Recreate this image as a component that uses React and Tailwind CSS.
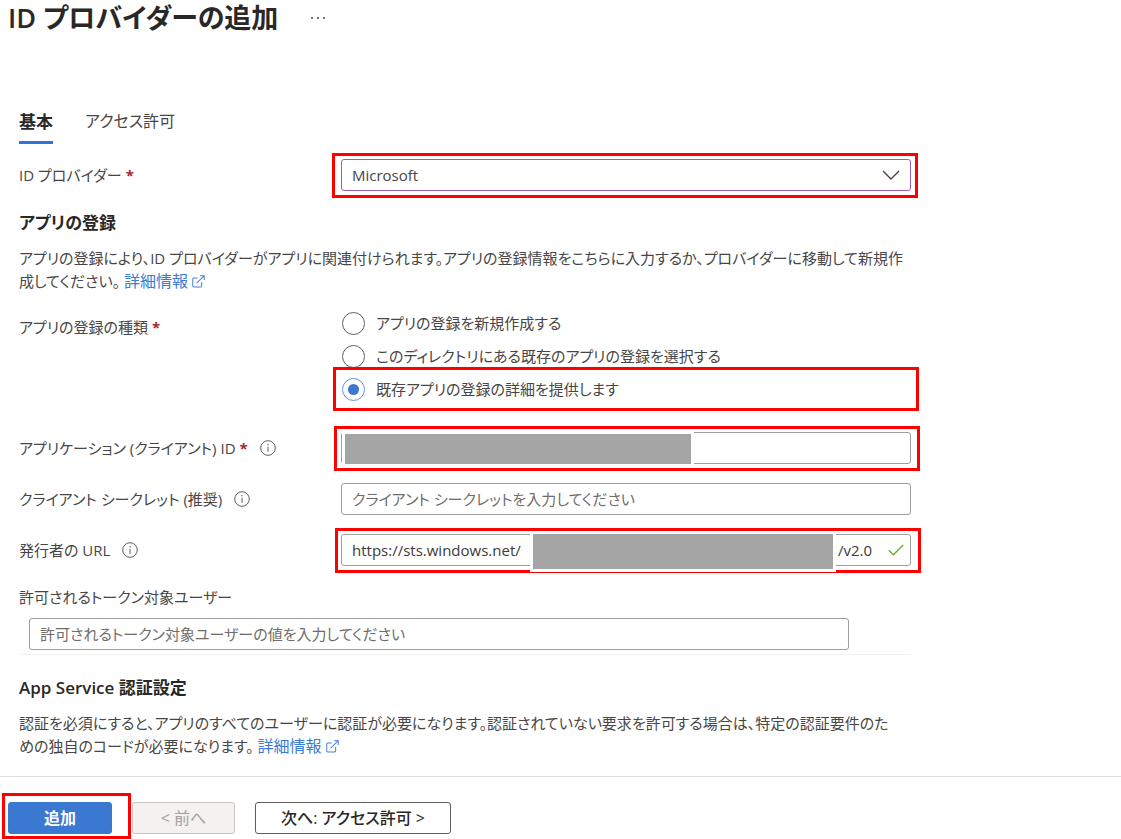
import React, { useState } from "react";

const RADIO_OPTIONS = [
    { id: "create", label: "アプリの登録を新規作成する" },
    { id: "pick", label: "このディレクトリにある既存のアプリの登録を選択する" },
    { id: "provide", label: "既存アプリの登録の詳細を提供します" },
];

const fieldStyle =
    "h-8 w-full rounded-[3px] border border-[#a09e9c] bg-white px-[10px] text-[#3b3a39] placeholder:text-[#6f6d6b] outline-none";

function Highlight({ className }) {
    return (
        <div
            aria-hidden="true"
            className={`pointer-events-none absolute border-[3px] border-[#ff0000] ${className}`}
        />
    );
}

function Required() {
    return <span className="ml-1 font-bold text-[#a4262c]">*</span>;
}

function InfoIcon() {
    return (
        <svg
            viewBox="0 0 16 16"
            className="ml-3 size-4 shrink-0"
            fill="none"
            stroke="#605e5c"
        >
            <circle cx="8" cy="8" r="7.3" strokeWidth="1" />
            <path d="M8 6.8v5" strokeWidth="1" />
            <circle cx="8" cy="4.7" r="0.7" fill="#605e5c" stroke="none" />
        </svg>
    );
}

function MoreLink() {
    return (
        <a
            href="#more"
            className="ml-1 inline-flex items-center gap-1 align-top text-base leading-[23px] text-[#3a7bd5]"
        >
            詳細情報
            <svg
                viewBox="0 0 14 14"
                className="size-[13px]"
                fill="none"
                stroke="#4f7fe0"
                strokeWidth="1.1"
            >
                <path d="M6 3.2H1.8a1 1 0 0 0-1 1v7.6a1 1 0 0 0 1 1h7.6a1 1 0 0 0 1-1V7.6" />
                <path d="M5 8.8 13 .9M8.6.8h4.6v4.6" />
            </svg>
        </a>
    );
}

function Row({ label, htmlFor, required, info, children }) {
    return (
        <div className="grid grid-cols-[322px_1fr]">
            <div className="flex h-8 items-center">
                <label htmlFor={htmlFor}>
                    {label}
                    {required && <Required />}
                </label>
                {info && <InfoIcon />}
            </div>
            <div className="relative">{children}</div>
        </div>
    );
}

function App() {
    const [selected, setSelected] = useState("provide");

    return (
        <div className="overflow-hidden bg-white font-['Open_Sans','Noto_Sans_CJK_JP',sans-serif] text-[15px] leading-[23px] text-[#484644] [font-feature-settings:'palt']">
            <header className="flex h-9 items-center gap-8 pl-2 text-[#292827]">
                <h1 className="text-[27px] leading-9 font-semibold">
                    ID プロバイダーの追加
                </h1>
                <button aria-label="その他" className="h-9">
                    <svg viewBox="0 0 16 4" className="h-1 w-4" fill="#484644">
                        <circle cx="2" cy="2" r="1" />
                        <circle cx="8" cy="2" r="1" />
                        <circle cx="14" cy="2" r="1" />
                    </svg>
                </button>
            </header>

            <main className="max-w-[911px] pl-[19px]">
                <div role="tablist" className="mt-[70px] flex gap-8 text-base">
                    <button
                        role="tab"
                        aria-selected="true"
                        className="h-[38px] border-b-[3px] border-[#2f74d8] pb-1 text-[17px] font-semibold text-[#292827]"
                    >
                        基本
                    </button>
                    <button
                        role="tab"
                        aria-selected="false"
                        className="h-[38px] pb-2"
                    >
                        アクセス許可
                    </button>
                </div>

                <div className="mt-[15px]">
                    <Row label="ID プロバイダー" htmlFor="provider" required>
                        <select
                            id="provider"
                            className="h-8 w-full appearance-none rounded-[3px] border border-[#9b5fc0] bg-white px-[10px] outline-none"
                        >
                            <option>Microsoft</option>
                        </select>
                        <svg
                            viewBox="0 0 18 10"
                            className="pointer-events-none absolute top-[11px] right-[11px] h-[10px] w-[18px]"
                            fill="none"
                            stroke="#484644"
                            strokeWidth="1.4"
                        >
                            <path d="m1 1 8 8 8-8" />
                        </svg>
                        <Highlight className="-top-[6px] -right-[7px] -bottom-[7px] -left-[9px]" />
                    </Row>
                </div>

                <h2 className="mt-5 text-[17px] leading-6 font-semibold text-[#292827]">
                    アプリの登録
                </h2>
                <p className="mt-3">
                    アプリの登録により、ID
                    プロバイダーがアプリに関連付けられます。アプリの登録情報をこちらに入力するか、プロバイダーに移動して新規作
                    <br />
                    成してください。
                    <MoreLink />
                </p>

                <fieldset className="mt-[14px] grid grid-cols-[322px_1fr]">
                    <div id="kind" className="pt-[9px]">
                        アプリの登録の種類
                        <Required />
                    </div>
                    <div
                        role="radiogroup"
                        aria-labelledby="kind"
                        className="flex flex-col"
                    >
                        {RADIO_OPTIONS.map((option) => (
                            <div
                                key={option.id}
                                className="relative flex h-[33px] items-center"
                            >
                                <input
                                    type="radio"
                                    name="kind"
                                    id={option.id}
                                    checked={selected === option.id}
                                    onChange={() => setSelected(option.id)}
                                    className="ml-px grid size-[23px] appearance-none place-items-center rounded-full border border-[#605e5c] bg-white checked:border-[#5a93e6] checked:before:size-[11px] checked:before:rounded-full checked:before:bg-[#3a78d2] checked:before:content-['']"
                                />
                                <label htmlFor={option.id} className="pl-[11px]">
                                    {option.label}
                                </label>
                                {option.id === "provide" && (
                                    <Highlight className="-top-[6px] -right-2 -bottom-[5px] -left-2" />
                                )}
                            </div>
                        ))}
                    </div>
                </fieldset>

                <div className="mt-[26px] flex flex-col gap-[19px]">
                    <Row
                        label="アプリケーション (クライアント) ID"
                        htmlFor="client-id"
                        required
                        info
                    >
                        <input id="client-id" className={fieldStyle} />
                        <div className="absolute -top-px -bottom-[3px] left-px w-[352px] border-[3px] border-white bg-[#a5a5a5]" />
                        <Highlight className="-top-[6px] -right-[9px] -bottom-[7px] -left-[7px]" />
                    </Row>
                    <Row
                        label="クライアント シークレット (推奨)"
                        htmlFor="secret"
                        info
                    >
                        <input
                            id="secret"
                            className={fieldStyle}
                            placeholder="クライアント シークレットを入力してください"
                        />
                    </Row>
                    <Row label="発行者の URL" htmlFor="issuer" info>
                        <div className={`${fieldStyle} flex items-center`}>
                            <input
                                id="issuer"
                                defaultValue="https://sts.windows.net/"
                                className="min-w-0 flex-1 outline-none"
                            />
                            <span>/v2.0</span>
                            <svg
                                viewBox="0 0 16 12"
                                className="-mr-1 ml-4 h-3 w-4"
                                fill="none"
                                stroke="#6bb131"
                                strokeWidth="1.4"
                            >
                                <path d="m.8 6.2 4.6 4.6L15.2 1" />
                            </svg>
                        </div>
                        <Highlight className="-top-[6px] -right-[10px] -bottom-[7px] -left-[6px]" />
                        <div className="absolute -top-[3px] right-[75px] -bottom-[6px] left-[189px] border-[3px] border-white bg-[#a5a5a5]" />
                    </Row>
                </div>

                <div className="mt-5 border-b border-[#f3f2f1] pb-1">
                    <label htmlFor="audience">
                        許可されるトークン対象ユーザー
                    </label>
                    <div className="mt-[9px] pr-[62px] pl-[10px]">
                        <input
                            id="audience"
                            className={fieldStyle}
                            placeholder="許可されるトークン対象ユーザーの値を入力してください"
                        />
                    </div>
                </div>

                <h2 className="mt-[21px] text-[17px] leading-6 font-semibold text-[#292827]">
                    App Service 認証設定
                </h2>
                <p className="mt-3">
                    認証を必須にすると、アプリのすべてのユーザーに認証が必要になります。認証されていない要求を許可する場合は、特定の認証要件のた
                    <br />
                    めの独自のコードが必要になります。
                    <MoreLink />
                </p>
            </main>

            <footer className="mt-[18px] flex border-t border-[#e1dfdd] pt-[25px] pb-[5px] pl-2 text-base">
                <div className="relative">
                    <button className="h-8 w-[104px] rounded-[3px] border border-[#3a78d2] bg-[#3a78d2] font-semibold text-white">
                        追加
                    </button>
                    <Highlight className="-top-[9px] -right-[19px] -bottom-[5px] -left-[6px] z-10" />
                </div>
                <button
                    disabled
                    className="ml-5 h-8 w-[103px] rounded-[3px] border border-[#c8c6c4] bg-[#f3f2f1] text-[#a19f9d]"
                >
                    &lt; 前へ
                </button>
                <button className="ml-5 h-8 w-[196px] rounded-[3px] border border-[#605e5c] bg-white font-medium text-[#292827]">
                    次へ: アクセス許可 &gt;
                </button>
            </footer>
        </div>
    );
}

export default App;
